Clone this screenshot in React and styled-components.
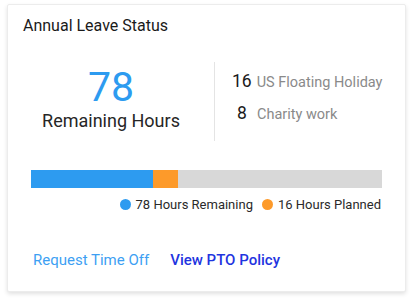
import React from 'react';
import styled, { createGlobalStyle } from 'styled-components';

const GlobalStyle = createGlobalStyle`
  html, body {
    margin: 0;
    padding: 0;
    background: #ffffff;
    font-family: Roboto, "Liberation Sans", sans-serif;
    color: #1f1f1f;
  }
`;

const Page = styled.div`
  padding: 4px 6px 10px 7px;
`;

const Card = styled.section`
  width: 399px;
  height: 288px;
  box-sizing: border-box;
  background: #fff;
  border: 1px solid #ececec;
  border-radius: 2px;
  box-shadow: 0 2px 4px rgba(0, 0, 0, 0.12);
  display: flex;
  flex-direction: column;
`;

const Title = styled.h2`
  margin: 0;
  padding: 11px 0 0 15px;
  font-size: 16px;
  font-weight: 400;
  line-height: 20px;
  color: #1a1a1a;
`;

const Stats = styled.div`
  display: flex;
  margin-top: 26px;
  height: 79px;
`;

const Main = styled.div`
  width: 206px;
  display: flex;
  flex-direction: column;
  align-items: center;
  padding-top: 2px;
`;

const BigNumber = styled.div`
  font-size: 41px;
  line-height: 46px;
  color: #2d9bf0;
  font-weight: 400;
`;

const BigLabel = styled.div`
  font-size: 18px;
  line-height: 22px;
  color: #262626;
`;

const Divider = styled.div`
  width: 1px;
  background: #e4e4e4;
`;

const Side = styled.ul`
  list-style: none;
  margin: 0;
  padding: 9px 0 0 17px;
  display: flex;
  flex-direction: column;
  gap: 12px;
`;

const SideRow = styled.li`
  display: flex;
  align-items: baseline;
  gap: 5px;
`;

const SideNum = styled.span`
  font-size: 17.5px;
  color: #1a1a1a;
  min-width: ${p => (p.$pad ? '20px' : 'auto')};
  text-align: center;
`;

const SideLabel = styled.span`
  font-size: 14.5px;
  color: #8a8a8a;
`;

const BarWrap = styled.div`
  padding: 0 23px 0 23px;
  margin-top: 29px;
`;

const Bar = styled.div`
  display: flex;
  height: 18px;
  background: #d8d8d8;
`;

const Segment = styled.div`
  background: ${p => p.$color};
`;

const Legend = styled.div`
  display: flex;
  justify-content: flex-end;
  gap: 9px;
  margin-top: 9px;
  padding-right: 1px;
`;

const LegendItem = styled.span`
  display: flex;
  align-items: center;
  gap: 5px;
  font-size: 13px;
  color: #2a2a2a;
`;

const Dot = styled.span`
  width: 11px;
  height: 11px;
  border-radius: 50%;
  background: ${p => p.$color};
`;

const Actions = styled.div`
  display: flex;
  gap: 21px;
  padding: 0 0 0 25px;
  margin-top: 39px;
`;

const Action = styled.a`
  font-size: 15px;
  text-decoration: none;
  cursor: pointer;
  color: ${p => (p.$primary ? '#1f35e0' : '#3d9ff3')};
  font-weight: ${p => (p.$primary ? 500 : 400)};
`;

const total = 225;
const remaining = 78;
const planned = 16;

export default function App() {
  return (
    <Page>
      <GlobalStyle />
      <Card>
        <Title>Annual Leave Status</Title>
        <Stats>
          <Main>
            <BigNumber>78</BigNumber>
            <BigLabel>Remaining Hours</BigLabel>
          </Main>
          <Divider />
          <Side>
            <SideRow>
              <SideNum>16</SideNum>
              <SideLabel>US Floating Holiday</SideLabel>
            </SideRow>
            <SideRow>
              <SideNum $pad>8</SideNum>
              <SideLabel>Charity work</SideLabel>
            </SideRow>
          </Side>
        </Stats>
        <BarWrap>
          <Bar>
            <Segment $color="#2d9bf0" style={{ width: `${(remaining / total) * 100}%` }} />
            <Segment $color="#fd9a2a" style={{ width: `${(planned / total) * 100}%` }} />
          </Bar>
          <Legend>
            <LegendItem>
              <Dot $color="#2d9bf0" />
              78 Hours Remaining
            </LegendItem>
            <LegendItem>
              <Dot $color="#fd9a2a" />
              16 Hours Planned
            </LegendItem>
          </Legend>
        </BarWrap>
        <Actions>
          <Action>Request Time Off</Action>
          <Action $primary>View PTO Policy</Action>
        </Actions>
      </Card>
    </Page>
  );
}
